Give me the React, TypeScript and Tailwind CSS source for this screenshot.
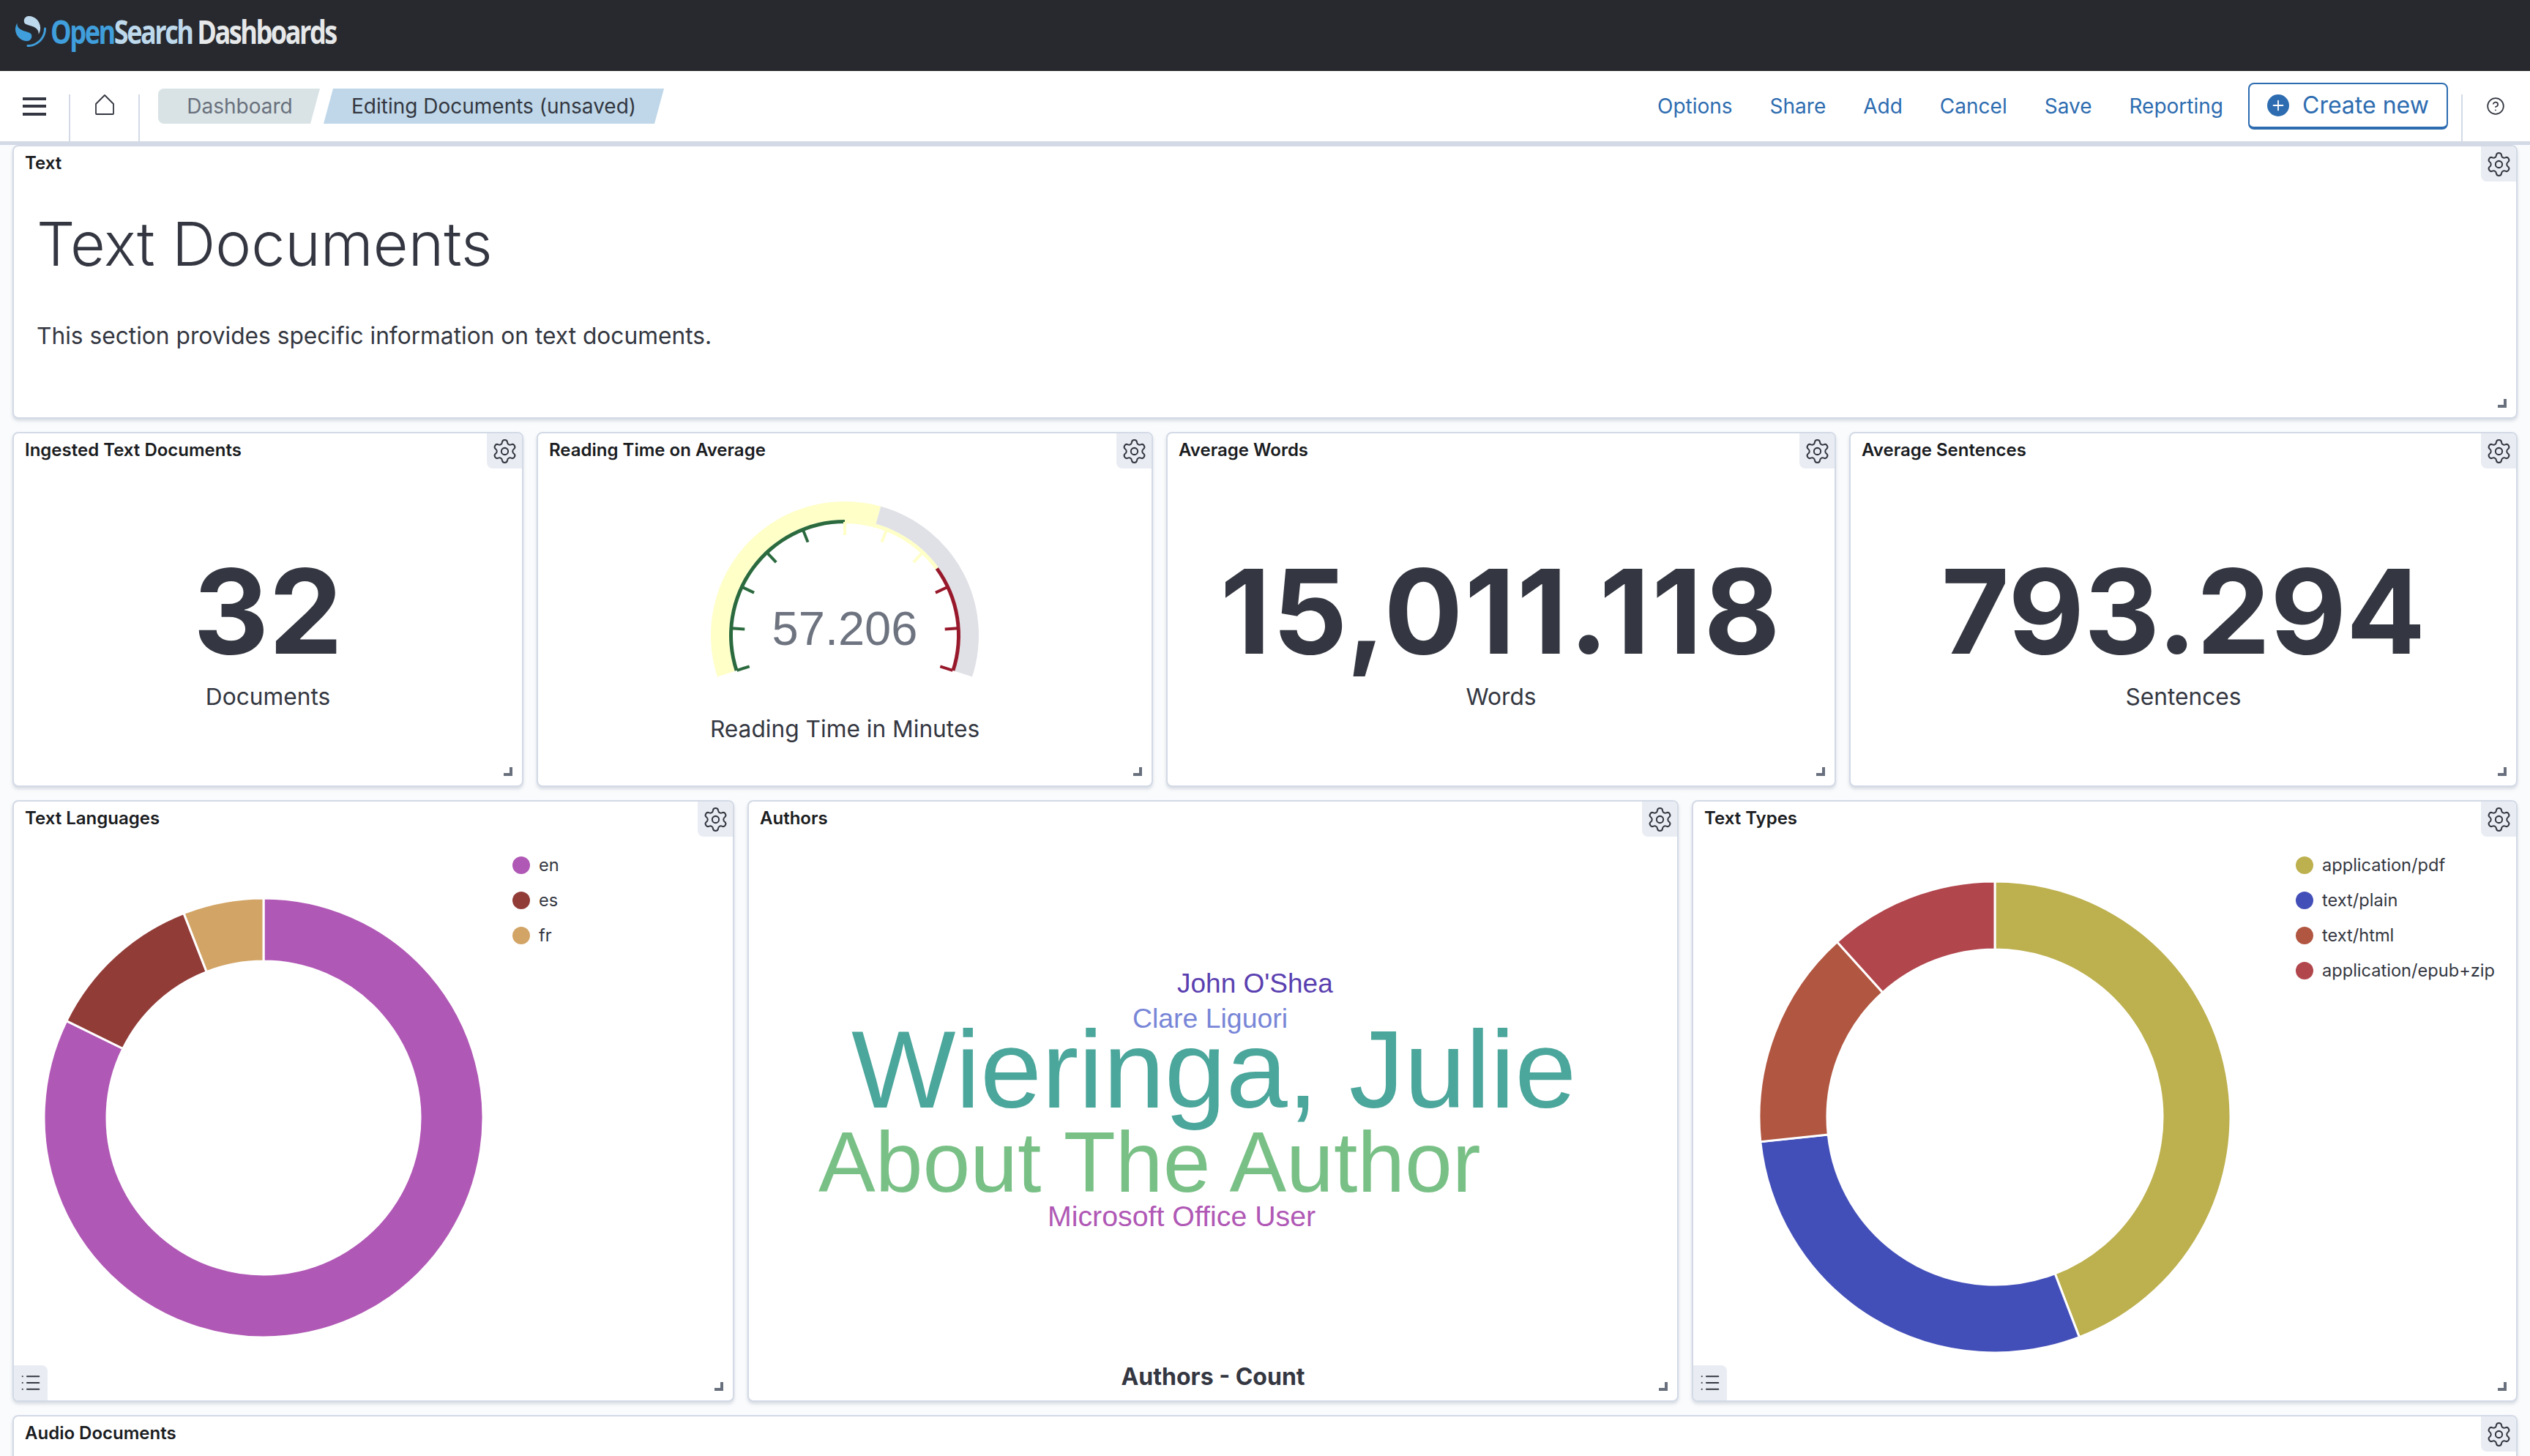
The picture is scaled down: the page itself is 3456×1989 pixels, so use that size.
import { CircleHelp, List, Plus, Settings } from "lucide-react"
import type { ReactNode } from "react"

function polar(cx: number, cy: number, r: number, deg: number) {
  const a = ((deg - 90) * Math.PI) / 180
  return [cx + r * Math.cos(a), cy + r * Math.sin(a)]
}

function ringPath(cx: number, cy: number, r1: number, r2: number, from: number, to: number) {
  const [ax, ay] = polar(cx, cy, r1, from)
  const [bx, by] = polar(cx, cy, r1, to)
  const [dx, dy] = polar(cx, cy, r2, to)
  const [ex, ey] = polar(cx, cy, r2, from)
  const big = to - from > 180 ? 1 : 0
  return `M${ax} ${ay}A${r1} ${r1} 0 ${big} 1 ${bx} ${by}L${dx} ${dy}A${r2} ${r2} 0 ${big} 0 ${ex} ${ey}Z`
}

function Logo() {
  return (
    <div className="flex items-center pl-[21px]">
      <svg viewBox="0 0 64 64" className="h-[42px] w-[42px]">
        <path fill="#3f9edb" d="M61.7374 23.5C60.4878 23.5 59.4748 24.513 59.4748 25.7626C59.4748 44.3813 44.3813 59.4748 25.7626 59.4748C24.513 59.4748 23.5 60.4878 23.5 61.7374C23.5 62.987 24.513 64 25.7626 64C46.8805 64 64 46.8805 64 25.7626C64 24.513 62.987 23.5 61.7374 23.5Z" />
        <path fill="#bed9ec" d="M48.0814 38C50.2572 34.4505 52.3615 29.7178 51.9475 23.0921C51.0899 9.36725 38.6589 -1.04463 26.9206 0.0837327C22.3253 0.525465 17.6068 4.2712 18.026 10.9805C18.2082 13.8961 19.6352 15.6169 21.9544 16.9399C24.1618 18.1992 26.9978 18.9969 30.2128 19.9011C34.0962 20.9934 38.6009 22.2203 42.063 24.7717C46.2125 27.8295 49.0491 31.3743 48.0814 38Z" />
        <path fill="#3f9edb" d="M3.91861 14C1.74276 17.5495 -0.361506 22.2822 0.0524931 28.9079C0.910072 42.6327 13.3411 53.0446 25.0794 51.9163C29.6747 51.4745 34.3932 47.7288 33.974 41.0195C33.7918 38.1039 32.3647 36.3831 30.0456 35.0601C27.8382 33.8008 25.0022 33.0031 21.7872 32.0989C17.9038 31.0066 13.3991 29.7797 9.93694 27.2283C5.78746 24.1705 2.95092 20.6257 3.91861 14Z" />
      </svg>
      <div className="ml-[6px] origin-left scale-x-[0.82] font-['Open_Sans',sans-serif] text-[44px] leading-none font-bold tracking-[-3px] whitespace-nowrap">
        <span className="text-[#3f9edb]">Open</span>
        <span className="text-[#bed9ec]">Search</span>
        <span className="ml-[8px] text-[#e6e8ea]">Dashboards</span>
      </div>
    </div>
  )
}

function NavBar() {
  return (
    <div className="relative z-10 flex h-[101px] items-start border-b-[5px] border-[#d3dae6] bg-white">
      <div className="flex h-full w-[94px] items-center justify-center pt-[1px]">
        <svg viewBox="0 0 32 25" className="h-[25px] w-[32px]" fill="#343741">
          <rect y="0" width="32" height="4" />
          <rect y="10" width="32" height="4" />
          <rect y="21" width="32" height="4" />
        </svg>
      </div>
      <div className="mt-[32px] flex h-[64px] w-[97px] items-start justify-center border-x-2 border-[#d3dae6]">
        <svg viewBox="0 0 26 28" className="h-[28px] w-[26px]" fill="none" stroke="#343741" strokeWidth="1.8" strokeLinejoin="round">
          <path d="M13 1L25 13V26a1 1 0 0 1-1 1H2a1 1 0 0 1-1-1V13Z" />
        </svg>
      </div>
      <div className="mt-[24px] ml-[25px] flex h-[48px] items-center gap-[5px] text-[28px] text-[#343741]">
        <div className="flex h-full w-[221px] items-center justify-center rounded-l-lg bg-[#d9e3e5] pl-[2px] text-[#69707d] [clip-path:polygon(0_0,100%_0,calc(100%-13px)_100%,0_100%)]">
          Dashboard
        </div>
        <div className="flex h-full w-[465px] items-center justify-center bg-[#bfd7e9] [clip-path:polygon(13px_0,100%_0,calc(100%-13px)_100%,0_100%)]">
          Editing Documents (unsaved)
        </div>
      </div>
      <div className="ml-auto flex items-center pt-[16px] text-[28px] text-[#2d6cb0]">
        <div className="flex h-[64px] items-center gap-[51px] pr-[34px]">
          <span>Options</span>
          <span>Share</span>
          <span>Add</span>
          <span>Cancel</span>
          <span>Save</span>
          <span>Reporting</span>
        </div>
        <div className="flex h-[64px] w-[273px] items-center gap-[18px] rounded-lg border-2 border-b-4 border-[#2d6cb0] pl-[24px] text-[32px]">
          <span className="flex h-[30px] w-[30px] items-center justify-center rounded-full bg-[#2d6cb0]">
            <Plus size={22} strokeWidth={2} className="text-white" />
          </span>
          Create new
        </div>
      </div>
      <div className="mt-[32px] ml-[18px] flex h-[64px] w-[94px] items-start justify-center border-l-2 border-[#d3dae6]">
        <CircleHelp size={26} strokeWidth={1.6} className="mt-[3px] mr-[2px] text-[#343741]" />
      </div>
    </div>
  )
}

function Panel({ title, legend, children }: { title: string; legend?: boolean; children?: ReactNode }) {
  return (
    <div className="relative h-full overflow-hidden rounded-lg border-2 border-[#d3dae6] bg-white shadow-[0_3px_4px_rgba(152,162,179,0.35)]">
      <div className="pl-[15px] pt-[6px] text-[24px] leading-[34px] font-semibold text-[#1a1c21]">{title}</div>
      <div className="absolute top-0 right-0 flex h-[48px] w-[48px] items-center justify-center rounded-bl-lg bg-[#e9edf3]">
        <Settings size={37} strokeWidth={1.3} className="text-[#343741]" />
      </div>
      {legend && (
        <div className="absolute bottom-0 left-0 flex h-[48px] w-[46px] items-center justify-center rounded-tr-lg bg-[#e9edf3]">
          <List size={30} strokeWidth={1.7} className="text-[#343741]" />
        </div>
      )}
      <div className="absolute right-[13px] bottom-[13px] h-[12px] w-[12px] border-r-[4px] border-b-[4px] border-[#69707d] [clip-path:polygon(100%_0,100%_100%,0_100%,0_60%,60%_60%,60%_0)]" />
      {children}
    </div>
  )
}

function Stat({ title, value, label, spread }: { title: string; value: string; label: string; spread?: boolean }) {
  return (
    <Panel title={title}>
      <div className="mt-[108px] flex flex-col items-center">
        <div className={spread ? "text-[160px] leading-[190px] font-bold tracking-[2.4px] text-[#343741]" : "text-[160px] leading-[190px] font-bold text-[#343741]"}>{value}</div>
        <div className="mt-[-2px] text-[31.7px] leading-[48px] text-[#343741]">{label}</div>
      </div>
    </Panel>
  )
}

function Gauge() {
  const cx = 419
  const cy = 278
  const ticks = [-108, -86.4, -64.8, -43.2, -21.6, 0, 21.6, 43.2, 64.8, 86.4, 108]
  return (
    <Panel title="Reading Time on Average">
      <svg viewBox="0 0 838 390" className="mt-[-42px] h-[390px] w-[838px]">
        <path d={ringPath(cx, cy, 183, 158, -108, 15.6)} fill="#ffffc8" />
        <path d={ringPath(cx, cy, 183, 158, 15.6, 108)} fill="#e0e1e6" />
        <path d={ringPath(cx, cy, 158, 153, -108, 0)} fill="#2b6a3e" />
        <path d={ringPath(cx, cy, 158, 153, 0, 54)} fill="#ffffc8" />
        <path d={ringPath(cx, cy, 158, 153, 54, 108)} fill="#97192b" />
        {ticks.map((t) => {
          const [x1, y1] = polar(cx, cy, 155, t)
          const [x2, y2] = polar(cx, cy, 137, t)
          const stroke = t < 0 ? "#2b6a3e" : t < 54 ? "#ffffc8" : "#97192b"
          return <line key={t} x1={x1} y1={y1} x2={x2} y2={y2} stroke={stroke} strokeWidth={4} />
        })}
        <text x={cx} y={cy + 13} textAnchor="middle" fontSize={65} fill="#6e7380" fontFamily="'Liberation Sans', sans-serif">
          57.206
        </text>
      </svg>
      <div className="mt-[-8px] text-center text-[31.7px] leading-[48px] text-[#343741]">Reading Time in Minutes</div>
    </Panel>
  )
}

type Slice = { color: string; label: string; from: number; to: number }

function Donut({ title, slices, size, inner, left, top }: { title: string; slices: Slice[]; size: number; inner: number; left: string; top: string }) {
  const c = size / 2
  return (
    <Panel title={title} legend>
      <div className="flex items-start justify-between">
        <svg viewBox={`0 0 ${size} ${size}`} className={`shrink-0 ${left} ${top}`} width={size} height={size}>
          {slices.map((s) => (
            <path key={s.label} d={ringPath(c, c, c, inner, s.from, s.to)} fill={s.color} stroke="#fff" strokeWidth={3} />
          ))}
        </svg>
      </div>
      <div className="absolute top-[71px] flex flex-col gap-[16px]" style={{ left: title === "Text Types" ? 823 : 681 }}>
        {slices.map((s) => (
          <div key={s.label} className="flex h-[32px] items-center gap-[12px] text-[23.6px] text-[#343741]">
            <span className="h-[24px] w-[24px] rounded-full" style={{ background: s.color }} />
            {s.label}
          </div>
        ))}
      </div>
    </Panel>
  )
}

function WordCloud() {
  return (
    <Panel title="Authors">
      <svg viewBox="0 0 1268 700" className="h-[700px] w-[1268px]" fontFamily="'Liberation Sans', sans-serif">
        <text x="585" y="221" fontSize="37" fill="#5a3fb0">John O'Shea</text>
        <text x="524" y="269" fontSize="37.4" fill="#7886d7">Clare Liguori</text>
        <text x="140" y="378" fontSize="151" fill="#4ba69b">Wieringa, Julie</text>
        <text x="95" y="493" fontSize="116.5" fill="#79c086">About The Author</text>
        <text x="408" y="540" fontSize="39.3" fill="#b058b5">Microsoft Office User</text>
      </svg>
      <div className="mt-[22px] text-center text-[32px] leading-[48px] font-bold text-[#343741]">Authors - Count</div>
    </Panel>
  )
}

const languages: Slice[] = [
  { color: "#b058b5", label: "en", from: 0, to: 296.2 },
  { color: "#923c38", label: "es", from: 296.2, to: 338.7 },
  { color: "#d2a466", label: "fr", from: 338.7, to: 360 },
]

const types: Slice[] = [
  { color: "#bdb04f", label: "application/pdf", from: 0, to: 159 },
  { color: "#434fb8", label: "text/plain", from: 159, to: 264 },
  { color: "#b15641", label: "text/html", from: 264, to: 318 },
  { color: "#b1464d", label: "application/epub+zip", from: 318, to: 360 },
]

export default function App() {
  return (
    <div className="h-[1989px] overflow-hidden bg-[#fafbfd] font-['Inter',sans-serif]">
      <div className="flex h-[97px] items-center bg-[#27292e] pb-[11px]">
        <Logo />
      </div>
      <NavBar />
      <div className="flex flex-col gap-[18px] px-[17px]">
        <div className="h-[374px]">
          <Panel title="Text">
            <div className="pl-[31px]">
              <div className="mt-[43px] text-[82.5px] leading-[100px] font-light text-[#343741]">Text Documents</div>
              <div className="mt-[52px] text-[31.7px] leading-[48px] text-[#343741]">This section provides specific information on text documents.</div>
            </div>
          </Panel>
        </div>
        <div className="grid h-[485px] grid-cols-[698px_842px_915px_1fr] gap-[18px]">
          <Stat title="Ingested Text Documents" value="32" label="Documents" />
          <Gauge />
          <Stat title="Average Words" value="15,011.118" label="Words" spread />
          <Stat title="Average Sentences" value="793.294" label="Sentences" />
        </div>
        <div className="grid h-[822px] grid-cols-[986px_1272px_1fr] gap-[18px]">
          <Donut title="Text Languages" slices={languages} size={600} inner={214} left="ml-[41px]" top="mt-[92px]" />
          <WordCloud />
          <Donut title="Text Types" slices={types} size={644} inner={229} left="ml-[90px]" top="mt-[69px]" />
        </div>
        <div className="h-[200px]">
          <Panel title="Audio Documents" />
        </div>
      </div>
    </div>
  )
}
